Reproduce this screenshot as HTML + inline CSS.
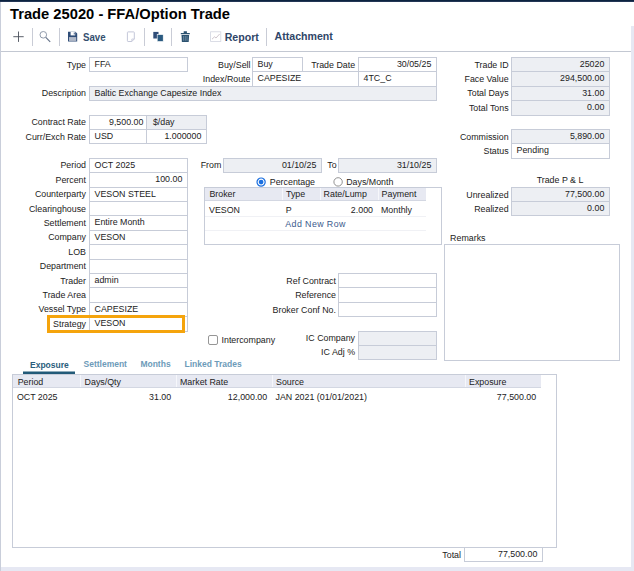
<!DOCTYPE html>
<html><head><meta charset="utf-8"><title>Trade 25020 - FFA/Option Trade</title>
<style>
html,body{margin:0;padding:0}
body{width:634px;height:571px;position:relative;overflow:hidden;background:#fff;font-family:"Liberation Sans",sans-serif;font-size:8.85px;color:#222}
.abs,.lb,.tx,.bx,.grid,.gh,.vl,.hl,.hl2,.radio,.cb,.tabline{position:absolute;box-sizing:border-box}
.lb{text-align:right;white-space:nowrap}
.tx{white-space:nowrap}
.bx{border:1px solid #c7ccd8;background:#fff;white-space:nowrap;overflow:hidden}
.bx span{position:absolute;left:4.5px;right:4.7px;display:block}
.bx i{display:inline-block;width:1.4px}
.bx.ro{background:#edeff3}
.bx.r{text-align:right}
.grid{border:1px solid #c7ccd8;background:#fff}
.gh{background:#e7e9f2;border-bottom:1px solid #d3d7e2}
.vl{width:1px;background:#f6f7fb}
.hl{border:3px solid #f5a40c}
.hl2{height:1px;background:#f0f1f5}
.link{color:#3a5a8c;letter-spacing:0.4px}
.radio{width:9.5px;height:9.5px;border-radius:50%;border:1px solid #858585;background:#fff}
.radio.on{border-color:#1a6fe0;border-width:1.4px}
.radio.on::after{content:"";position:absolute;left:1px;top:1px;width:4.7px;height:4.7px;border-radius:50%;background:#1a6fe0}
.cb{width:10px;height:10px;border:1px solid #969696;border-radius:2px;background:#fff}
.tab{font-size:8.5px;font-weight:bold;color:#6d9bb9}
.tab.on{color:#2a5d7c}
.tabline{height:3px;background:#225a78}
#topbar{left:0;top:0;width:634px;height:1px;background:#0c2340}
#topbar2{left:0;top:1px;width:634px;height:1px;background:#233655}
#leftedge{left:0;top:2px;width:1px;height:569px;background:#c9ceda}
#rightedge{left:631px;top:26px;width:3px;height:545px;background:#e6e8f3}
#bottomedge{left:1px;top:567px;width:633px;height:4px;background:#e6e8f3}
#tbline{left:1px;top:51px;width:630px;height:1px;background:#c3c8d2}
#title{left:10px;top:4.85px;font-size:14.72px;font-weight:bold;color:#000;line-height:18px;height:18px}
.sep{position:absolute;width:1px;background:#c9ccd6;top:28px;height:18px}
.tbt{position:absolute;font-weight:bold;font-size:10.6px;color:#2f4668;top:30.1px;line-height:14px;white-space:nowrap}
svg{position:absolute;overflow:visible}
</style></head><body>
<div id="topbar" class="abs"></div><div id="topbar2" class="abs"></div>
<div id="leftedge" class="abs"></div>
<div id="rightedge" class="abs"></div>
<div id="bottomedge" class="abs"></div>
<div id="title" class="abs tx">Trade 25020 - FFA/Option Trade</div>
<div id="tbline" class="abs"></div>

<svg style="left:0;top:0" width="634" height="52" viewBox="0 0 634 52">
 <!-- plus -->
 <path d="M13.3 36.7H23.7M18.5 31.5V41.9" stroke="#4a4f5a" stroke-width="0.9" fill="none"/>
 <!-- magnifier -->
 <circle cx="43.3" cy="34.8" r="3.3" stroke="#8590a2" stroke-width="0.9" fill="none"/>
 <path d="M45.8 37.4L50.2 41.8" stroke="#66748a" stroke-width="1.2" fill="none"/>
 <!-- save floppy -->
 <path d="M68 31.8H75.4L77.2 33.6V41.6H68Z" fill="#2f4d78"/>
 <rect x="70.6" y="31.8" width="4.6" height="3.6" fill="#fff"/>
 <rect x="73.8" y="32.5" width="0.9" height="2" fill="#2f4d78"/>
 <rect x="69" y="37" width="7.2" height="4" fill="#a6afc0"/>
 <path d="M69 38.3H76.2M69 39.7H76.2" stroke="#c3c9d6" stroke-width="0.5"/>
 <!-- new doc (disabled) -->
 <path d="M127.4 32.6Q127.4 31.9 128.1 31.9H133.6Q134.3 31.9 134.3 32.6V39L131.8 41.5H128.1Q127.4 41.5 127.4 40.8Z" stroke="#c4c7d9" stroke-width="1" fill="#fff"/>
 <path d="M134.3 39H131.8V41.5" stroke="#c4c7d9" stroke-width="0.8" fill="none"/>
 <!-- copy -->
 <rect x="153.3" y="31.9" width="5.2" height="6.6" fill="#2f4d78"/>
 <rect x="157.2" y="34.6" width="6" height="6.9" fill="#2a5a80" stroke="#fff" stroke-width="0.6"/>
 <!-- trash -->
 <path d="M180.8 33H189.8V34.3H180.8Z M183.7 31.2H186.9V33H183.7Z" fill="#2c5270"/>
 <path d="M181.5 34.9H189.1L188.7 41.9H181.9Z" fill="#2c5270"/>
 <path d="M183.6 36V40.8M185.3 36V40.8M187 36V40.8" stroke="#8fa6b8" stroke-width="0.6"/>
 <!-- chart (disabled) -->
 <rect x="210.6" y="31.8" width="10.2" height="9.6" fill="#fff" stroke="#d2d5e0" stroke-width="0.8"/>
 <path d="M212 39.2L214.5 36.8L216 38L219.6 34" stroke="#c2b6c0" stroke-width="0.8" fill="none"/>
</svg>
<div class="sep" style="left:32px"></div>
<div class="sep" style="left:59px"></div>
<div class="sep" style="left:144px"></div>
<div class="sep" style="left:171px"></div>
<div class="sep" style="left:266px"></div>
<div class="tbt" style="left:82.7px;font-size:10px;top:31.1px;color:#36506f;transform:scaleX(0.97);transform-origin:0 0">Save</div>
<div class="tbt" style="left:224.7px">Report</div>
<div class="tbt" style="left:274.6px;top:29.4px">Attachment</div>

<div class="lb " style="left:-64.00px;top:57.65px;width:150px;height:14.40px;line-height:14.40px">Type</div>
<div class="bx" style="left:89px;top:57px;width:99px;height:15px"><span style="top:-0.95px;line-height:14.40px">FFA</span></div>
<div class="lb " style="left:-64.00px;top:86.45px;width:150px;height:14.40px;line-height:14.40px">Description</div>
<div class="bx ro" style="left:89px;top:86px;width:348px;height:15px"><span style="top:-1.15px;line-height:14.40px">Baltic Exchange Capesize Index</span></div>
<div class="lb " style="left:-64.00px;top:115.25px;width:150px;height:14.40px;line-height:14.40px">Contract Rate</div>
<div class="bx r" style="left:89px;top:115px;width:58px;height:15px"><span style="top:-1.35px;line-height:14.40px;right:2.6px">9,500.00</span></div>
<div class="bx ro" style="left:146px;top:115px;width:61px;height:15px"><span style="top:-1.35px;line-height:14.40px"><i></i>$/day</span></div>
<div class="lb " style="left:-64.00px;top:129.65px;width:150px;height:14.40px;line-height:14.40px">Curr/Exch Rate</div>
<div class="bx" style="left:89px;top:129px;width:58px;height:15px"><span style="top:-0.95px;line-height:14.40px">USD</span></div>
<div class="bx r" style="left:146px;top:129px;width:61px;height:15px"><span style="top:-0.95px;line-height:14.40px">1.000000</span></div>
<div class="lb " style="left:-64.00px;top:158.45px;width:150px;height:14.40px;line-height:14.40px">Period</div>
<div class="bx" style="left:89px;top:158px;width:99px;height:15px"><span style="top:-1.15px;line-height:14.40px">OCT 2025</span></div>
<div class="lb " style="left:-64.00px;top:172.85px;width:150px;height:14.40px;line-height:14.40px">Percent</div>
<div class="bx r" style="left:89px;top:172px;width:99px;height:16px"><span style="top:-0.75px;line-height:14.40px">100.00</span></div>
<div class="lb " style="left:-64.00px;top:187.25px;width:150px;height:14.40px;line-height:14.40px">Counterparty</div>
<div class="bx" style="left:89px;top:187px;width:99px;height:15px"><span style="top:-1.35px;line-height:14.40px">VESON STEEL</span></div>
<div class="lb " style="left:-64.00px;top:201.65px;width:150px;height:14.40px;line-height:14.40px">Clearinghouse</div>
<div class="bx" style="left:89px;top:201px;width:99px;height:15px"><span style="top:-0.95px;line-height:14.40px"></span></div>
<div class="lb " style="left:-64.00px;top:216.05px;width:150px;height:14.40px;line-height:14.40px">Settlement</div>
<div class="bx" style="left:89px;top:215px;width:99px;height:16px"><span style="top:-0.55px;line-height:14.40px">Entire Month</span></div>
<div class="lb " style="left:-64.00px;top:230.45px;width:150px;height:14.40px;line-height:14.40px">Company</div>
<div class="bx" style="left:89px;top:230px;width:99px;height:15px"><span style="top:-1.15px;line-height:14.40px">VESON</span></div>
<div class="lb " style="left:-64.00px;top:244.85px;width:150px;height:14.40px;line-height:14.40px">LOB</div>
<div class="bx" style="left:89px;top:244px;width:99px;height:16px"><span style="top:-0.75px;line-height:14.40px"></span></div>
<div class="lb " style="left:-64.00px;top:259.25px;width:150px;height:14.40px;line-height:14.40px">Department</div>
<div class="bx" style="left:89px;top:259px;width:99px;height:15px"><span style="top:-1.35px;line-height:14.40px"></span></div>
<div class="lb " style="left:-64.00px;top:273.65px;width:150px;height:14.40px;line-height:14.40px">Trader</div>
<div class="bx" style="left:89px;top:273px;width:99px;height:15px"><span style="top:-0.95px;line-height:14.40px">admin</span></div>
<div class="lb " style="left:-64.00px;top:288.05px;width:150px;height:14.40px;line-height:14.40px">Trade Area</div>
<div class="bx" style="left:89px;top:287px;width:99px;height:16px"><span style="top:-0.55px;line-height:14.40px"></span></div>
<div class="lb " style="left:-64.00px;top:302.45px;width:150px;height:14.40px;line-height:14.40px">Vessel Type</div>
<div class="bx" style="left:89px;top:302px;width:99px;height:15px"><span style="top:-1.15px;line-height:14.40px">CAPESIZE</span></div>
<div class="lb " style="left:-64.00px;top:316.85px;width:150px;height:14.40px;line-height:14.40px">Strategy</div>
<div class="bx" style="left:89px;top:316px;width:99px;height:16px"><span style="top:-0.75px;line-height:14.40px">VESON</span></div>
<div class="hl" style="left:47px;top:315px;width:138px;height:18px"></div>
<div class="lb " style="left:100.50px;top:57.65px;width:150px;height:14.40px;line-height:14.40px">Buy/Sell</div>
<div class="bx" style="left:252px;top:57px;width:51px;height:15px"><span style="top:-0.95px;line-height:14.40px">Buy</span></div>
<div class="lb " style="left:205.10px;top:57.65px;width:150px;height:14.40px;line-height:14.40px">Trade Date</div>
<div class="bx r" style="left:358px;top:57px;width:79px;height:15px"><span style="top:-0.95px;line-height:14.40px">30/05/25</span></div>
<div class="lb " style="left:100.50px;top:72.05px;width:150px;height:14.40px;line-height:14.40px">Index/Route</div>
<div class="bx" style="left:252px;top:71px;width:107px;height:16px"><span style="top:-0.55px;line-height:14.40px">CAPESIZE</span></div>
<div class="bx" style="left:358px;top:71px;width:79px;height:16px"><span style="top:-0.55px;line-height:14.40px">4TC_C</span></div>
<div class="tx " style="left:200.70px;top:158.45px;height:14.40px;line-height:14.40px">From</div>
<div class="bx ro r" style="left:223px;top:158px;width:99px;height:15px"><span style="top:-1.15px;line-height:14.40px">01/10/25</span></div>
<div class="tx " style="left:327.30px;top:158.45px;height:14.40px;line-height:14.40px">To</div>
<div class="bx ro r" style="left:338px;top:158px;width:99px;height:15px"><span style="top:-1.15px;line-height:14.40px">31/10/25</span></div>
<svg style="left:255px;top:176px" width="12" height="12" viewBox="0 0 12 12"><circle cx="6.1" cy="6.1" r="4.1" fill="#fff" stroke="#1a6fe0" stroke-width="1.2"/><circle cx="6.1" cy="6.1" r="2.4" fill="#1a6fe0"/></svg>
<div class="tx " style="left:269.80px;top:174.60px;height:14.40px;line-height:14.40px">Percentage</div>
<svg style="left:332px;top:176px" width="12" height="12" viewBox="0 0 12 12"><circle cx="6.1" cy="5.9" r="4.2" fill="#fff" stroke="#858585" stroke-width="0.9"/></svg>
<div class="tx " style="left:346.20px;top:174.60px;height:14.40px;line-height:14.40px">Days/Month</div>
<div class="grid" style="left:204px;top:187px;width:238px;height:58px"></div>
<div class="gh" style="left:205px;top:188px;width:221px;height:13px"></div>
<div class="vl" style="left:282px;top:188px;height:12px"></div>
<div class="vl" style="left:320px;top:188px;height:12px"></div>
<div class="vl" style="left:378px;top:188px;height:12px"></div>
<div class="tx " style="left:209.40px;top:187.30px;height:14.40px;line-height:14.40px">Broker</div>
<div class="tx " style="left:286.00px;top:187.30px;height:14.40px;line-height:14.40px">Type</div>
<div class="tx " style="left:323.60px;top:187.30px;height:14.40px;line-height:14.40px">Rate/Lump</div>
<div class="tx " style="left:381.60px;top:187.30px;height:14.40px;line-height:14.40px">Payment</div>
<div class="tx " style="left:209.00px;top:203.00px;height:14.40px;line-height:14.40px">VESON</div>
<div class="tx " style="left:285.80px;top:203.00px;height:14.40px;line-height:14.40px">P</div>
<div class="tx " style="right:261.00px;top:203.00px;height:14.40px;line-height:14.40px">2.000</div>
<div class="tx " style="left:381.00px;top:203.00px;height:14.40px;line-height:14.40px">Monthly</div>
<div class="hl2" style="left:205px;top:216px;width:221px"></div>
<div class="tx link" style="left:285.30px;top:217.30px;height:14.40px;line-height:14.40px">Add New Row</div>
<div class="hl2" style="left:205px;top:230px;width:221px"></div>
<div class="lb " style="left:186.00px;top:273.75px;width:150px;height:14.40px;line-height:14.40px">Ref Contract</div>
<div class="bx" style="left:338px;top:273px;width:99px;height:15px"><span style="top:-0.95px;line-height:14.40px"></span></div>
<div class="lb " style="left:186.00px;top:288.15px;width:150px;height:14.40px;line-height:14.40px">Reference</div>
<div class="bx" style="left:338px;top:287px;width:99px;height:16px"><span style="top:-0.55px;line-height:14.40px"></span></div>
<div class="lb " style="left:186.00px;top:302.55px;width:150px;height:14.40px;line-height:14.40px">Broker Conf No.</div>
<div class="bx" style="left:338px;top:302px;width:99px;height:15px"><span style="top:-1.15px;line-height:14.40px"></span></div>
<div class="cb" style="left:208px;top:335px"></div>
<div class="tx " style="left:221.50px;top:332.70px;height:14.40px;line-height:14.40px">Intercompany</div>
<div class="lb " style="left:205.00px;top:331.05px;width:150px;height:14.40px;line-height:14.40px">IC Company</div>
<div class="bx ro" style="left:358px;top:331px;width:79px;height:15px"><span style="top:-1.35px;line-height:14.40px"></span></div>
<div class="lb " style="left:205.00px;top:345.45px;width:150px;height:14.40px;line-height:14.40px">IC Adj %</div>
<div class="bx ro" style="left:358px;top:345px;width:79px;height:15px"><span style="top:-0.95px;line-height:14.40px"></span></div>
<div class="lb " style="left:358.60px;top:57.65px;width:150px;height:14.40px;line-height:14.40px">Trade ID</div>
<div class="bx ro r" style="left:511px;top:57px;width:99px;height:15px"><span style="top:-0.95px;line-height:14.40px">25020</span></div>
<div class="lb " style="left:358.60px;top:72.05px;width:150px;height:14.40px;line-height:14.40px">Face Value</div>
<div class="bx ro r" style="left:511px;top:71px;width:99px;height:16px"><span style="top:-0.55px;line-height:14.40px">294,500.00</span></div>
<div class="lb " style="left:358.60px;top:86.45px;width:150px;height:14.40px;line-height:14.40px">Total Days</div>
<div class="bx ro r" style="left:511px;top:86px;width:99px;height:15px"><span style="top:-1.15px;line-height:14.40px">31.00</span></div>
<div class="lb " style="left:358.60px;top:100.85px;width:150px;height:14.40px;line-height:14.40px">Total Tons</div>
<div class="bx ro r" style="left:511px;top:100px;width:99px;height:16px"><span style="top:-0.75px;line-height:14.40px">0.00</span></div>
<div class="lb " style="left:358.60px;top:129.65px;width:150px;height:14.40px;line-height:14.40px">Commission</div>
<div class="bx ro r" style="left:511px;top:129px;width:99px;height:15px"><span style="top:-0.95px;line-height:14.40px">5,890.00</span></div>
<div class="lb " style="left:358.60px;top:144.05px;width:150px;height:14.40px;line-height:14.40px">Status</div>
<div class="bx" style="left:511px;top:143px;width:99px;height:16px"><span style="top:-0.55px;line-height:14.40px">Pending</span></div>
<div class="tx " style="left:536.70px;top:172.60px;height:14.40px;line-height:14.40px">Trade P &amp; L</div>
<div class="lb " style="left:358.60px;top:187.65px;width:150px;height:14.40px;line-height:14.40px">Unrealized</div>
<div class="bx ro r" style="left:511px;top:187px;width:99px;height:15px"><span style="top:-1.35px;line-height:14.40px">77,500.00</span></div>
<div class="lb " style="left:358.60px;top:202.05px;width:150px;height:14.40px;line-height:14.40px">Realized</div>
<div class="bx ro r" style="left:511px;top:201px;width:99px;height:15px"><span style="top:-0.95px;line-height:14.40px">0.00</span></div>
<div class="tx " style="left:450.10px;top:230.70px;height:14.40px;line-height:14.40px">Remarks</div>
<div class="grid" style="left:444px;top:244px;width:176px;height:117px"></div>
<div class="tx tab on" style="left:30.00px;top:357.80px;height:14.00px;line-height:14.00px">Exposure</div>
<div class="tx tab" style="left:83.50px;top:356.80px;height:14.00px;line-height:14.00px">Settlement</div>
<div class="tx tab" style="left:140.40px;top:356.80px;height:14.00px;line-height:14.00px">Months</div>
<div class="tx tab" style="left:184.50px;top:356.80px;height:14.00px;line-height:14.00px">Linked Trades</div>
<div class="tabline" style="left:23px;top:371px;width:52px;height:1px;background:#8fabba"></div>
<div class="tabline" style="left:23px;top:372px;width:52px;height:2px"></div>
<div class="grid" style="left:12px;top:374px;width:545px;height:174px"></div>
<div class="gh" style="left:13px;top:375px;width:528px;height:13px"></div>
<div class="vl" style="left:80px;top:375px;height:12px"></div>
<div class="vl" style="left:176px;top:375px;height:12px"></div>
<div class="vl" style="left:272px;top:375px;height:12px"></div>
<div class="vl" style="left:465px;top:375px;height:12px"></div>
<div class="tx " style="left:17.70px;top:375.20px;height:14.40px;line-height:14.40px">Period</div>
<div class="tx " style="left:84.60px;top:375.20px;height:14.40px;line-height:14.40px">Days/Qty</div>
<div class="tx " style="left:180.00px;top:375.20px;height:14.40px;line-height:14.40px">Market Rate</div>
<div class="tx " style="left:276.00px;top:375.20px;height:14.40px;line-height:14.40px">Source</div>
<div class="tx " style="left:469.00px;top:375.20px;height:14.40px;line-height:14.40px">Exposure</div>
<div class="tx " style="left:16.90px;top:389.60px;height:14.40px;line-height:14.40px">OCT 2025</div>
<div class="tx " style="right:462.80px;top:389.60px;height:14.40px;line-height:14.40px">31.00</div>
<div class="tx " style="right:366.80px;top:389.60px;height:14.40px;line-height:14.40px">12,000.00</div>
<div class="tx " style="left:275.50px;top:389.60px;height:14.40px;line-height:14.40px">JAN 2021 (01/01/2021)</div>
<div class="tx " style="right:97.80px;top:389.60px;height:14.40px;line-height:14.40px">77,500.00</div>
<div class="lb " style="left:311.00px;top:547.50px;width:150px;height:14.40px;line-height:14.40px">Total</div>
<div class="bx r" style="left:464px;top:547px;width:79px;height:15px"><span style="top:-1.00px;line-height:14.40px">77,500.00</span></div>
</body></html>
